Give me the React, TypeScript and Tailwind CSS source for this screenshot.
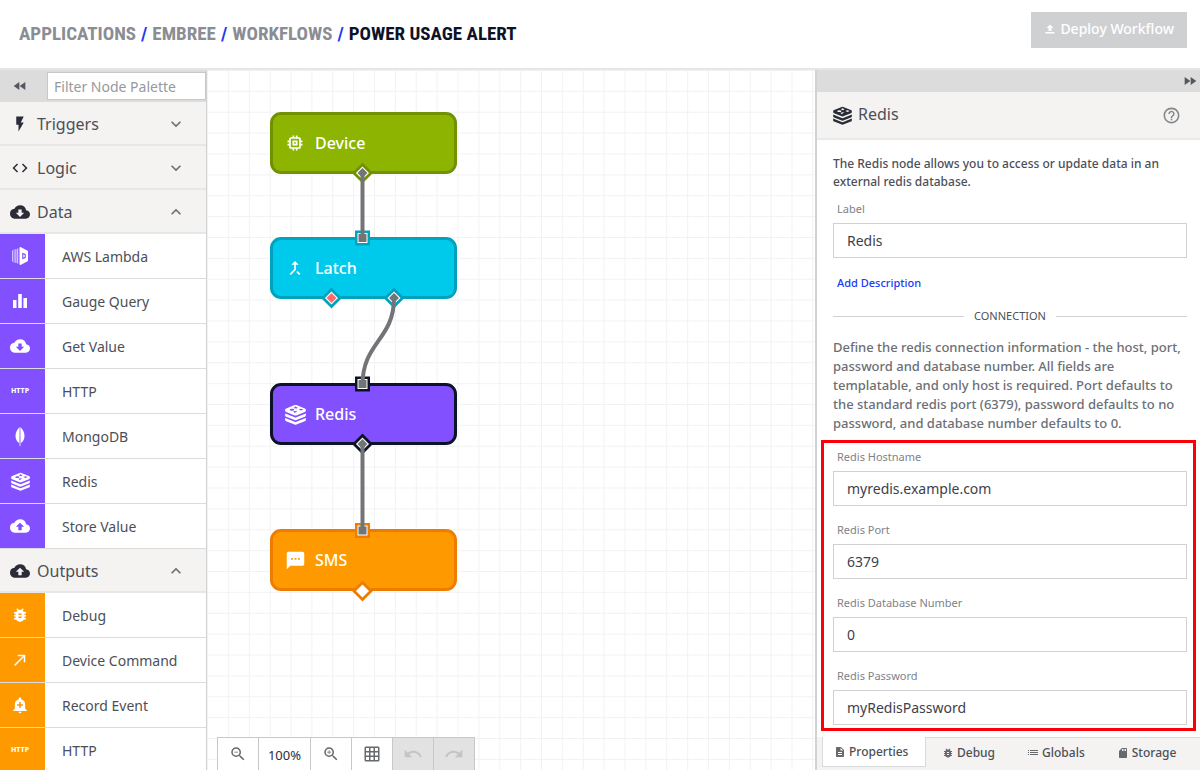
import React from "react";
import type { ComponentType, ReactNode } from "react";
import {
  MdAddAlert,
  MdBackup,
  MdBugReport,
  MdCallMade,
  MdCallMerge,
  MdCloudDownload,
  MdCode,
  MdDescription,
  MdFastForward,
  MdFastRewind,
  MdFlashOn,
  MdGridOn,
  MdHelpOutline,
  MdKeyboardArrowDown,
  MdKeyboardArrowUp,
  MdMemory,
  MdRedo,
  MdSdStorage,
  MdSms,
  MdUndo,
  MdZoomIn,
  MdZoomOut,
} from "react-icons/md";

type Icon = ComponentType<{ className?: string }>;

function BarsIcon() {
  return (
    <svg viewBox="0 0 14 14" className="size-[14px]" fill="currentColor" aria-hidden="true">
      <path d="M0 6h3.5v8H0zM5.2 0h3.6v14H5.2zM10.4 4H14v10h-3.6z" />
    </svg>
  );
}

function LambdaIcon() {
  return (
    <svg viewBox="0 0 16 18" className="h-[18px] w-4" fill="currentColor" aria-hidden="true">
      <path d="M0 3.500h.8v11H0zM1.700 2.500h.8v13h-.8zM3.400 2h1v14h-1zM5.200 1.500h1v15h-1z" opacity=".8" />
      <path
        fillRule="evenodd"
        d="M7.500.5 8.500 0 16 4v10l-7.500 4-1-.5zM10.200 5.800v6.400l3.600-1.200V7zM11.300 7.600l1.400.5v1.800l-1.400.5z"
      />
    </svg>
  );
}

function LeafIcon() {
  return (
    <svg viewBox="0 0 10 19" className="h-[19px] w-[10px]" fill="currentColor" aria-hidden="true">
      <path d="M4.600 0C2.200 2.500.5 5 .5 9c0 3.200 1.500 5.800 3.900 7.200zM5.400 0C7.800 2.500 9.500 5 9.500 9c0 3.200-1.500 5.800-3.900 7.200zM4.600 16h.8v3h-.8z" />
      <path d="M4.500 1h1v15h-1z" opacity=".35" />
    </svg>
  );
}

function RedisIcon({ className }: { className?: string }) {
  return (
    <svg viewBox="0 0 24 24" className={className} fill="currentColor" aria-hidden="true">
      <path
        fillRule="evenodd"
        d="M11 1.200q1-.4 2 0l9.600 3.900q1.200.5 1.200 1V8q0 .6-1.200 1.100L13 13q-1 .4-2 0L1.400 9.100Q.2 8.600.2 8V6.100q0-.5 1.200-1zM12 2.500l-.6 1-1.800.2 1.400.7-.3 1 1.500-.5 1.500.5-.2-1 1.300-.6-1.900-.3zM5.400 6.500a2.600 1.100 0 1 0 5.200 0a2.600 1.100 0 1 0-5.200 0zM11 10.300l3.400-2.700-5 .8zM15.500 6.300l3 1.200 2.500-1.200-2.800-1z"
      />
      <path d="M.2 10.800 11 15.200q1 .4 2 0l10.800-4.400v2.600q0 .6-1.200 1.100L13 18.400q-1 .4-2 0l-9.600-3.900Q.2 14 .2 13.400z" />
      <path d="M.2 15.900 11 20.300q1 .4 2 0l10.800-4.400v2.600q0 .6-1.200 1.100L13 23.500q-1 .4-2 0l-9.600-3.900Q.2 19.100.2 18.500z" />
    </svg>
  );
}

function ListIcon({ className }: { className?: string }) {
  return (
    <svg viewBox="0 0 12 12" className={className} fill="currentColor" aria-hidden="true">
      <path d="M1 3h1v1H1zM3 3h8v1H3zM1 5h1v1H1zM3 5h8v1H3zM1 7h1v1H1zM3 7h8v1H3z" />
    </svg>
  );
}

function UploadIcon({ className }: { className?: string }) {
  return (
    <svg viewBox="0 0 24 24" className={className} fill="currentColor" aria-hidden="true">
      <path d="M9 16h6v-6h4l-7-7-7 7h4zM3 18h18v3H3z" />
    </svg>
  );
}

function HttpMark() {
  return <span className="text-[7px] font-extrabold">HTTP</span>;
}

function Section({ icon, title, open }: { icon: ReactNode; title: string; open?: boolean }) {
  return (
    <button
      type="button"
      aria-expanded={!!open}
      className="flex h-11 w-full shrink-0 items-center border-b-2 border-[#e6e7e7] bg-[#f4f3f2] pt-[2px] pr-5 pl-[10px] text-left text-base text-[#4c4f58]"
    >
      <span className="mr-[7px] flex w-5 justify-center text-[#2a2d37]">{icon}</span>
      <span className="flex-1">{title}</span>
      <Chevron open={open} />
    </button>
  );
}

function Chevron({ open }: { open?: boolean }) {
  return open ? (
    <MdKeyboardArrowUp className="size-5 text-[#6b6e74]" />
  ) : (
    <MdKeyboardArrowDown className="size-5 text-[#6b6e74]" />
  );
}

function PaletteItem({ icon, label, tone }: { icon: ReactNode; label: string; tone: "data" | "output" }) {
  return (
    <li className="flex h-[45px] shrink-0 items-stretch border-b border-[#dcdcdd]">
      <span
        className={
          tone === "data"
            ? "flex w-[45px] items-center justify-center bg-[#8250ff] pr-[5px] text-white"
            : "flex w-[45px] items-center justify-center bg-[#ff9900] pr-[5px] text-white"
        }
      >
        {icon}
      </span>
      <span className="flex items-center pt-[2px] pl-[17px] text-sm text-[#4c4f58]">{label}</span>
    </li>
  );
}

function Palette() {
  return (
    <aside className="flex w-[207px] shrink-0 flex-col overflow-hidden border-r border-[#d0d2d4] bg-white">
      <div className="flex h-8 shrink-0 items-center bg-[#dcdcdc]">
        <button type="button" aria-label="Collapse palette" className="flex w-[47px] justify-center pr-[7px] text-[#55585e]">
          <MdFastRewind className="size-4" />
        </button>
        <input
          type="text"
          aria-label="Filter Node Palette"
          placeholder="Filter Node Palette"
          className="h-7 min-w-0 flex-1 border border-[#c6c8ca] bg-white px-[6px] text-sm text-[#4c4f58] outline-none placeholder:text-[#97999d]"
        />
      </div>
      <Section icon={<MdFlashOn className="size-[18px]" />} title="Triggers" />
      <Section icon={<MdCode className="size-[18px]" />} title="Logic" />
      <Section icon={<MdCloudDownload className="size-5" />} title="Data" open />
      <ul className="shrink-0">
        <PaletteItem tone="data" icon={<LambdaIcon />} label="AWS Lambda" />
        <PaletteItem tone="data" icon={<BarsIcon />} label="Gauge Query" />
        <PaletteItem tone="data" icon={<MdCloudDownload className="size-5" />} label="Get Value" />
        <PaletteItem tone="data" icon={<HttpMark />} label="HTTP" />
        <PaletteItem tone="data" icon={<LeafIcon />} label="MongoDB" />
        <PaletteItem tone="data" icon={<RedisIcon className="size-[19px]" />} label="Redis" />
        <PaletteItem tone="data" icon={<MdBackup className="size-5" />} label="Store Value" />
      </ul>
      <Section icon={<MdBackup className="size-5" />} title="Outputs" open />
      <ul className="shrink-0">
        <PaletteItem tone="output" icon={<MdBugReport className="size-[18px]" />} label="Debug" />
        <PaletteItem tone="output" icon={<MdCallMade className="size-[18px]" />} label="Device Command" />
        <PaletteItem tone="output" icon={<MdAddAlert className="size-[18px]" />} label="Record Event" />
        <PaletteItem tone="output" icon={<HttpMark />} label="HTTP" />
      </ul>
    </aside>
  );
}

function FlowNode({ className, icon, label }: { className: string; icon: ReactNode; label: string }) {
  return (
    <div
      className={
        "absolute left-[63px] flex h-[62px] w-[187px] items-center rounded-[11px] border-3 font-medium text-white " + className
      }
    >
      <span className="flex w-[42px] justify-center pl-[2px]">{icon}</span>
      <span className="text-base">{label}</span>
    </div>
  );
}

function InPort({ x, y, color }: { x: number; y: number; color: string }) {
  return (
    <g>
      <rect x={x - 7.5} y={y - 7.5} width="15" height="15" fill={color} />
      <rect x={x - 4.5} y={y - 4.5} width="9" height="9" fill="#737477" stroke="#fff" strokeWidth="1" />
    </g>
  );
}

function OutPort({ x, y, color, fill }: { x: number; y: number; color: string; fill: string }) {
  return (
    <g transform={`translate(${x} ${y}) rotate(45)`}>
      <rect x="-6" y="-6" width="12" height="12" fill="#fff" stroke={color} strokeWidth="2.800" />
      <rect x="-3.500" y="-3.500" width="7" height="7" fill={fill} />
    </g>
  );
}

function ToolButton({ label, disabled, children }: { label: string; disabled?: boolean; children: ReactNode }) {
  return (
    <button
      type="button"
      aria-label={label}
      disabled={disabled}
      className="flex w-[41px] items-center justify-center border-r border-[#c6c8ca] text-[#66696e] disabled:bg-[#e2e2e2] disabled:text-[#c3c4c6]"
    >
      {children}
    </button>
  );
}

function Canvas() {
  return (
    <main className="relative min-w-0 flex-1 overflow-hidden bg-white">
      <svg className="absolute inset-0 size-full" aria-hidden="true">
        <defs>
          <pattern id="grid" width="20.875" height="20.875" patternUnits="userSpaceOnUse">
            <path d="M20.875 0H0V20.875" fill="none" stroke="#f2f2f2" strokeWidth="2" />
          </pattern>
        </defs>
        <rect width="100%" height="100%" fill="url(#grid)" />
      </svg>

      <FlowNode className="top-[42px] border-[#719100] bg-[#8cb400]" label="Device" icon={<MdMemory className="size-5" />} />
      <FlowNode className="top-[167px] border-[#00a2bd] bg-[#00caeb]" label="Latch" icon={<MdCallMerge className="size-5" />} />
      <FlowNode
        className="top-[313px] border-[#0c1327] bg-[#8250ff]"
        label="Redis"
        icon={<RedisIcon className="size-[21px]" />}
      />
      <FlowNode className="top-[459px] border-[#ed7d00] bg-[#ff9900]" label="SMS" icon={<MdSms className="size-[21px]" />} />

      <svg className="absolute inset-0 size-full" aria-hidden="true">
        <InPort x={155.5} y={168} color="#00a2bd" />
        <InPort x={155.5} y={314} color="#0c1327" />
        <InPort x={155.5} y={460.5} color="#ed7d00" />
        <OutPort x={155.5} y={103} color="#719100" fill="#737477" />
        <OutPort x={124.5} y={228} color="#00a2bd" fill="#ff6b6b" />
        <OutPort x={187} y={228} color="#00a2bd" fill="#737477" />
        <OutPort x={155.5} y={374} color="#0c1327" fill="#737477" />
        <OutPort x={155.5} y={521} color="#ed7d00" fill="#fff" />
        <g fill="none" stroke="#737477" strokeWidth="4">
          <path d="M155.500 102V169" />
          <path d="M187 228C187 270 155.500 272 155.500 315" />
          <path d="M155.500 374V462" />
        </g>
      </svg>

      <div className="absolute bottom-0 left-[10px] flex h-[33px] border-t border-l border-[#c6c8ca] bg-white">
        <ToolButton label="Zoom out">
          <MdZoomOut className="size-[18px]" />
        </ToolButton>
        <output className="flex w-[52px] items-center justify-center border-r border-[#c6c8ca] pt-1 text-[13px] text-[#2a2d37]">
          100%
        </output>
        <ToolButton label="Zoom in">
          <MdZoomIn className="size-[18px]" />
        </ToolButton>
        <ToolButton label="Toggle grid">
          <MdGridOn className="size-[18px]" />
        </ToolButton>
        <ToolButton label="Undo" disabled>
          <MdUndo className="size-5" />
        </ToolButton>
        <ToolButton label="Redo" disabled>
          <MdRedo className="size-5" />
        </ToolButton>
      </div>
    </main>
  );
}

function Field({ id, label, value }: { id: string; label: string; value: string }) {
  return (
    <div>
      <label htmlFor={id} className="block pl-1 text-[11px] leading-4 text-[#7f8288]">
        {label}
      </label>
      <input
        id={id}
        type="text"
        defaultValue={value}
        className="mt-[6px] block h-[35px] w-full border border-[#cfd1d3] bg-white px-[13px] text-sm text-[#3e414a] outline-none"
      />
    </div>
  );
}

function Tab({ icon: Icon, label, active }: { icon: Icon; label: string; active?: boolean }) {
  return (
    <button
      type="button"
      role="tab"
      aria-selected={!!active}
      className={
        active
          ? "mb-[3px] flex w-[104px] items-center gap-[3px] border-x border-b border-[#d9dadb] bg-white pl-[11px] text-xs font-medium text-[#4c4f58]"
          : "flex items-center gap-[3px] border-t border-[#d9dadb] px-4 pb-[2px] text-xs font-medium text-[#4c4f58]"
      }
    >
      <Icon className="size-3 text-[#66696e]" />
      {label}
    </button>
  );
}

function Inspector() {
  return (
    <aside className="flex w-[385px] shrink-0 flex-col border-l-2 border-[#d0d2d4] bg-white">
      <div className="flex h-[22px] shrink-0 items-center justify-end bg-[#dcdcdc] pr-[2px]">
        <button type="button" aria-label="Collapse panel" className="text-[#55585e]">
          <MdFastForward className="size-4" />
        </button>
      </div>
      <div className="flex h-12 shrink-0 items-center border-b-2 border-[#e9e9e9] bg-[#f4f3f2] pr-[19px] pl-4">
        <RedisIcon className="size-[19px] text-[#2a2d37]" />
        <h2 className="ml-[6px] flex-1 pb-[2px] text-base text-[#4c4f58]">Redis</h2>
        <button type="button" aria-label="Help" className="text-[#85888d]">
          <MdHelpOutline className="size-[19px]" />
        </button>
      </div>
      <div className="min-h-0 flex-1 overflow-hidden pt-[15px] pr-[13px] pl-4">
        <p className="text-xs leading-[18px] font-medium text-[#4c4f58]">
          The Redis node allows you to access or update data in an external redis database.
        </p>
        <div className="mt-[10px]">
          <Field id="node-label" label="Label" value="Redis" />
        </div>
        <a href="#description" className="mt-[17px] block pl-1 text-[11px] leading-4 font-medium text-[#2238f5]">
          Add Description
        </a>
        <h3 className="mt-[17px] flex items-center gap-[10px] text-[11px] leading-4 text-[#4c4f58]">
          <span className="h-px flex-1 bg-[#cfd1d3]" />
          CONNECTION
          <span className="h-px flex-1 bg-[#cfd1d3]" />
        </h3>
        <p className="mt-[14px] text-[13px] leading-[19px] font-medium text-[#6c6f75]">
          Define the redis connection information - the host, port, password and database number. All fields are
          templatable, and only host is required. Port defaults to the standard redis port (6379), password defaults to
          no password, and database number defaults to 0.
        </p>
        <div className="-mr-[9px] -ml-3 mt-[7px] flex flex-col gap-4 border-3 border-[#fb0007] pt-[6px] pr-[6px] pb-[3px] pl-[9px]">
          <Field id="redis-host" label="Redis Hostname" value="myredis.example.com" />
          <Field id="redis-port" label="Redis Port" value="6379" />
          <Field id="redis-db" label="Redis Database Number" value="0" />
          <Field id="redis-password" label="Redis Password" value="myRedisPassword" />
        </div>
      </div>
      <div className="flex h-[33px] shrink-0 bg-[#f4f3f2] pl-[5px]">
        <div role="tablist" className="flex">
          <Tab icon={MdDescription} label="Properties" active />
          <Tab icon={MdBugReport} label="Debug" />
          <Tab icon={ListIcon} label="Globals" />
          <Tab icon={MdSdStorage} label="Storage" />
        </div>
        <div className="flex-1 border-t border-[#d9dadb]" />
      </div>
    </aside>
  );
}

export default function App() {
  return (
    <div className="flex h-screen flex-col bg-white font-['Noto_Sans',sans-serif]">
      <header className="flex h-[70px] shrink-0 items-start justify-between border-b-2 border-[#e6e6e6] pr-[13px] pl-[19px]">
        <nav
          aria-label="Breadcrumb"
          className="flex gap-[5px] pt-[20px] font-['Roboto_Condensed','Roboto',sans-serif] text-[19px] leading-7 font-bold text-[#8a8d93]"
        >
          <a href="#applications">APPLICATIONS</a>
          <span className="text-[#2238f5]">/</span>
          <a href="#embree">EMBREE</a>
          <span className="text-[#2238f5]">/</span>
          <a href="#workflows">WORKFLOWS</a>
          <span className="text-[#2238f5]">/</span>
          <span aria-current="page" className="text-[#0c1327]">
            POWER USAGE ALERT
          </span>
        </nav>
        <button
          type="button"
          disabled
          className="mt-3 flex h-9 items-center gap-1 bg-[#cfd0d2] px-[13px] pb-[2px] text-sm font-medium text-white"
        >
          <UploadIcon className="size-3" />
          Deploy Workflow
        </button>
      </header>
      <div className="flex min-h-0 flex-1">
        <Palette />
        <Canvas />
        <Inspector />
      </div>
    </div>
  );
}
